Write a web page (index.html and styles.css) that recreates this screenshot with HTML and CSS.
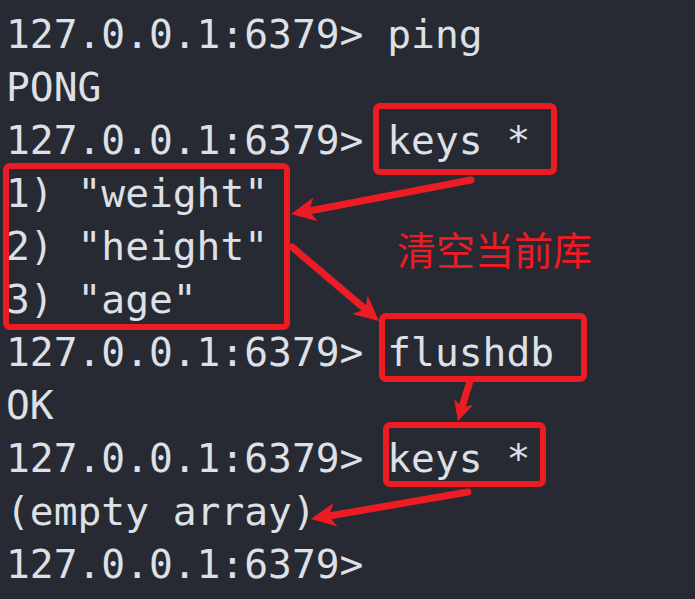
FILE: index.html
```html
<!DOCTYPE html>
<html lang="zh">
<head>
<meta charset="utf-8">
<title>redis-cli flushdb</title>
<link rel="stylesheet" href="styles.css">
</head>
<body>
<div class="screen">
  <div class="terminal">
    <div class="line">127.0.0.1:6379&gt; ping</div>
    <div class="line">PONG</div>
    <div class="line">127.0.0.1:6379&gt; keys *</div>
    <div class="line">1) "weight"</div>
    <div class="line">2) "height"</div>
    <div class="line">3) "age"</div>
    <div class="line">127.0.0.1:6379&gt; flushdb</div>
    <div class="line">OK</div>
    <div class="line">127.0.0.1:6379&gt; keys *</div>
    <div class="line">(empty array)</div>
    <div class="line">127.0.0.1:6379&gt;</div>
  </div>
  <div class="note">清空当前库</div>
  <svg class="marks" width="695" height="599" viewBox="0 0 695 599">
    <g fill="none" stroke="#ed1c24" stroke-width="6">
      <rect x="376" y="106" width="178" height="66" rx="4"/>
      <rect x="6" y="166" width="281" height="161" rx="4"/>
      <rect x="382" y="316" width="202" height="63" rx="4"/>
      <rect x="386" y="425" width="157" height="59" rx="4"/>
    </g>
    <g stroke="#ed1c24" stroke-width="7" stroke-linecap="round">
      <line x1="471" y1="180" x2="309" y2="211"/>
      <line x1="292" y1="247" x2="365" y2="309"/>
      <line x1="470" y1="381" x2="462" y2="407"/>
      <line x1="468" y1="492" x2="329" y2="516"/>
    </g>
    <g fill="#ed1c24">
      <polygon points="291,214 317.8,221.2 309,211 313.4,197.6"/>
      <polygon points="379,321 352.1,314 365.3,309.3 367.7,295.6"/>
      <polygon points="458,421 454.1,399 462,407.6 473.3,404.8"/>
      <polygon points="311,519 337.6,526.6 328.7,515.9 333.6,503"/>
    </g>
  </svg>
</div>
</body>
</html>
```
FILE: styles.css
```css
html, body {
  margin: 0;
  padding: 0;
  background: #282a33;
}
.screen {
  position: relative;
  width: 695px;
  height: 599px;
  overflow: hidden;
  background: #282a33;
}
.terminal {
  padding: 8px 0 0 6px;
  font-family: "DejaVu Sans Mono", "Liberation Mono", monospace;
  font-size: 39.6px;
  line-height: 53px;
  color: #dde0e6;
}
.line {
  height: 53px;
  white-space: pre;
}
.note {
  position: absolute;
  left: 397px;
  top: 223px;
  font-family: "Noto Sans CJK SC", sans-serif;
  font-size: 39px;
  line-height: 50px;
  color: #ed1c24;
}
.marks {
  position: absolute;
  left: 0;
  top: 0;
  pointer-events: none;
}
```
